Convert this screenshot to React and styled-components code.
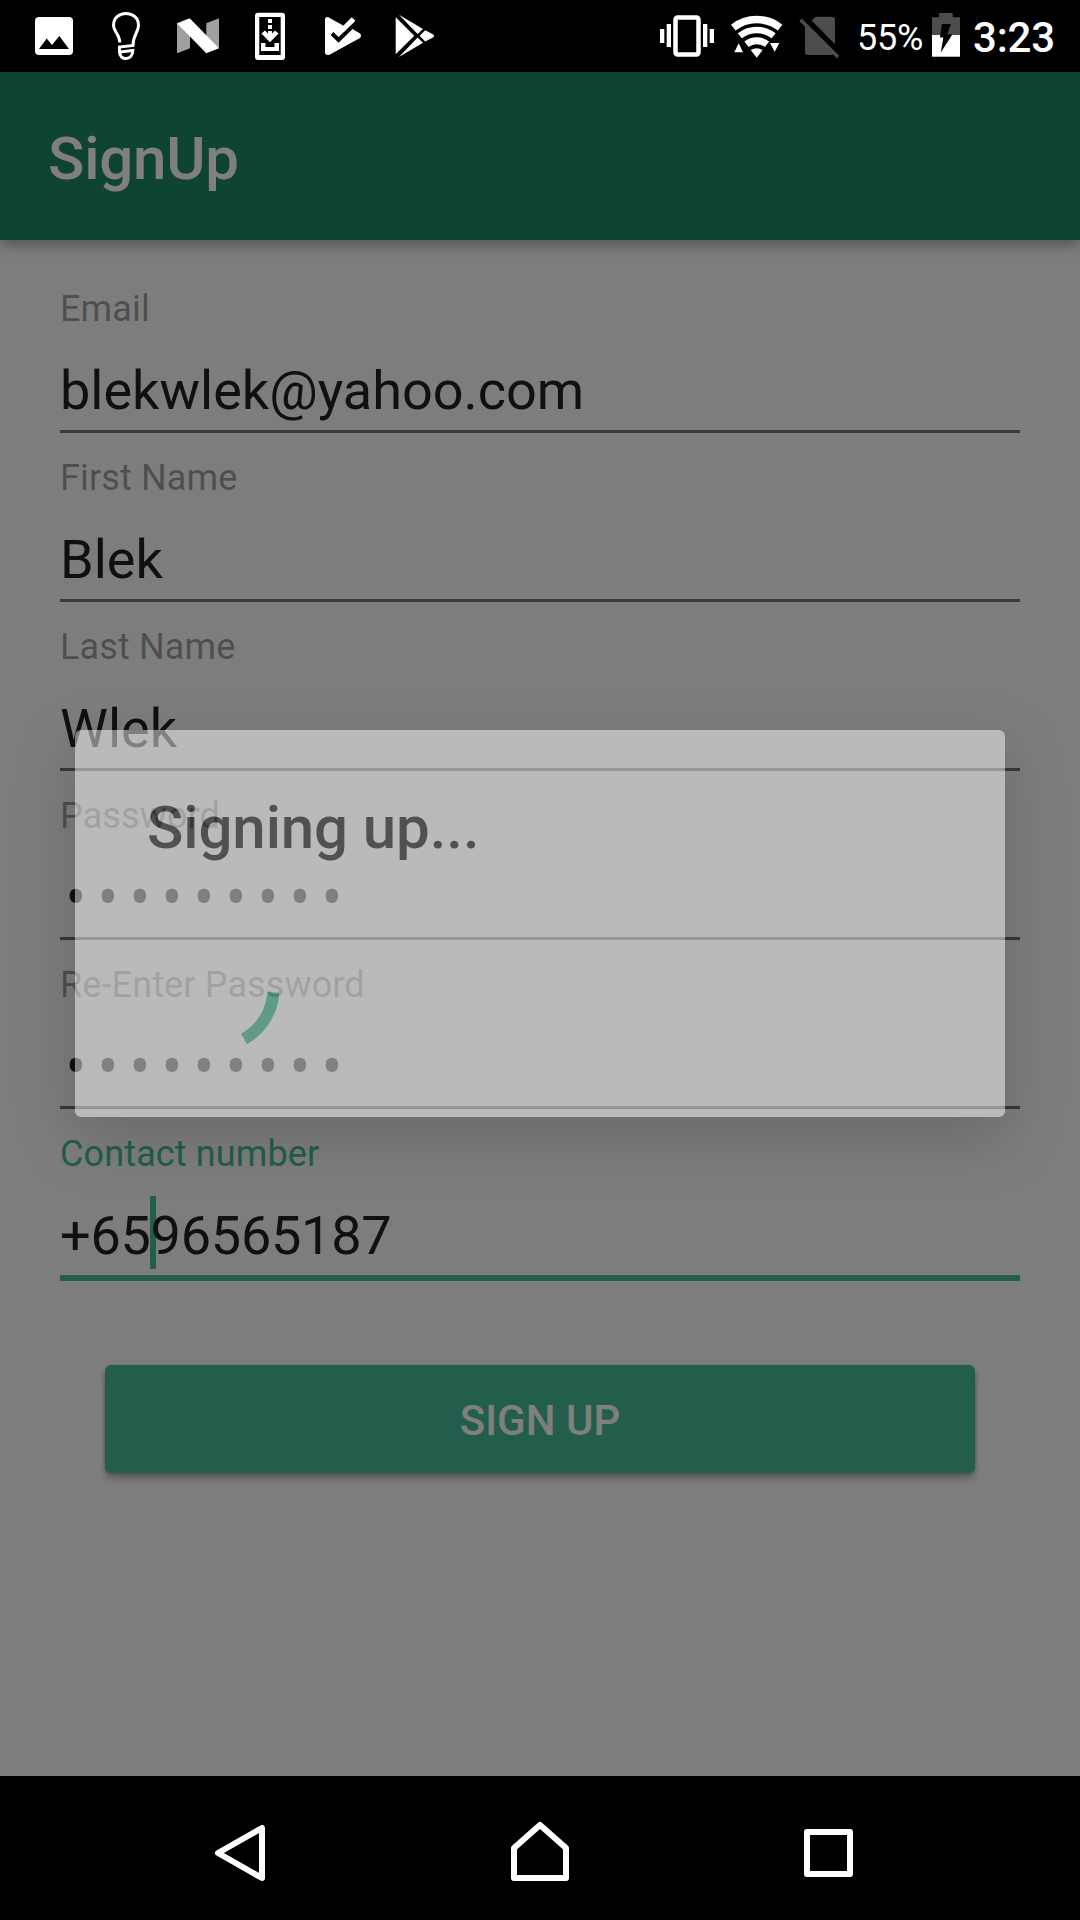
import React from "react";
import styled, { createGlobalStyle } from "styled-components";

const GlobalStyle = createGlobalStyle`
  * { box-sizing: border-box; }
  body { margin: 0; background: #000; font-family: Roboto, "Noto Sans", sans-serif; }
`;

const Screen = styled.div`
  width: 1080px;
  height: 1920px;
  display: flex;
  flex-direction: column;
  overflow: hidden;
`;

const StatusBar = styled.header`
  flex: none;
  height: 72px;
  display: flex;
  align-items: flex-start;
  justify-content: space-between;
  background: #000;
  color: #fff;
`;

const StatusGroup = styled.div`
  display: flex;
  height: 72px;
  padding: 0 ${(p) => p.$end || 0}px 0 ${(p) => p.$start || 0}px;
`;

const Glyph = styled.svg`
  flex: none;
  display: block;
`;

const Percent = styled.span`
  width: 68px;
  margin-left: -2px;
  font-size: 36px;
  line-height: 77px;
  letter-spacing: -0.2px;
  white-space: nowrap;
`;

const Clock = styled.span`
  width: 83px;
  padding-left: 1px;
  font-size: 42px;
  font-weight: 500;
  line-height: 75px;
  letter-spacing: -0.2px;
  white-space: nowrap;
`;

const Activity = styled.main`
  position: relative;
  flex: 1;
  display: flex;
  flex-direction: column;
  background: #fafafa;
`;

const AppBar = styled.div`
  flex: none;
  height: 168px;
  padding-left: 48px;
  display: flex;
  align-items: center;
  background: #1e8666;
  box-shadow: 0 4px 14px rgba(0, 0, 0, 0.36);
`;

const AppTitle = styled.h1`
  margin: 0;
  color: #fff;
  font-size: 60px;
  font-weight: 500;
  line-height: 72px;
  letter-spacing: -0.2px;
  padding-top: 6px;
`;

const Form = styled.form`
  display: flex;
  flex-direction: column;
  padding: 48px 60px 0;
`;

const Field = styled.div`
  display: flex;
  flex-direction: column;
  height: 169px;
`;

const Label = styled.label`
  font-size: 36px;
  line-height: 42px;
  letter-spacing: 0.13px;
  color: ${(p) => (p.$focused ? "#44bc96" : "rgba(0, 0, 0, 0.38)")};
`;

const Value = styled.div`
  position: relative;
  z-index: 0;
  margin-top: 29px;
  height: 64px;
  font-size: 54px;
  line-height: 64px;
  letter-spacing: ${(p) => (p.$numeric ? "-0.25px" : "0")};
  color: #212121;
  white-space: nowrap;
`;

const Masked = styled.span`
  display: flex;
  font-size: 62px;
`;

const Bullet = styled.span`
  width: 32px;
  text-align: center;
  transform: scaleY(1.08);
`;

const Caret = styled.i`
  position: relative;
  display: inline-block;
  width: 0;

  &::before {
    content: "";
    position: absolute;
    z-index: -1;
    left: -1px;
    bottom: -15px;
    width: 6px;
    height: 73px;
    background: #44bc96;
  }
`;

const Underline = styled.div`
  margin-top: 7px;
  height: ${(p) => (p.$focused ? 6 : 3)}px;
  flex: none;
  background: ${(p) => (p.$focused ? "#44bc96" : "rgba(0, 0, 0, 0.54)")};
`;

const SubmitButton = styled.button`
  margin: 63px 45px 0;
  height: 108px;
  border: 0;
  padding: 3px 0 0;
  border-radius: 6px;
  background: #44bc96;
  color: #fff;
  font: 500 42px/50px Roboto, sans-serif;
  box-shadow: 0 6px 6px rgba(0, 0, 0, 0.22), 0 1px 4px rgba(0, 0, 0, 0.2);
`;

const Scrim = styled.div`
  position: absolute;
  inset: 0;
  display: flex;
  align-items: center;
  justify-content: center;
  background: rgba(0, 0, 0, 0.5);
`;

const Dialog = styled.section`
  width: 930px;
  height: 387px;
  margin-bottom: 1px;
  padding: 62px 72px 0;
  border-radius: 6px;
  background: #fff;
  opacity: 0.472;
  box-shadow: 0 20px 58px 0 rgba(0, 0, 0, 0.32);
`;

const DialogTitle = styled.h2`
  margin: 0;
  font-size: 60px;
  font-weight: 500;
  line-height: 72px;
  letter-spacing: -0.1px;
  color: rgba(0, 0, 0, 0.87);
`;

const Spinner = styled.svg`
  display: block;
  margin-top: 53px;
`;

const NavBar = styled.nav`
  flex: none;
  height: 144px;
  display: flex;
  justify-content: center;
  background: #000;
`;

const NavButton = styled.span`
  width: 288px;
  height: 144px;
`;

/* Every status glyph is drawn in screen pixels; x is its left edge on the bar. */
function StatusGlyph({ x, width, children }) {
  return (
    <Glyph width={width} height="72" viewBox={`${x} 0 ${width} 72`} fill="#fff">
      {children}
    </Glyph>
  );
}

function StatusIcons() {
  return (
    <StatusGroup>
      <StatusGlyph x={0} width={90}>
        <rect x="35" y="17" width="38" height="38" rx="4" />
        <path d="M39 49 46.7 38.5 52 45 59.3 36 69 49Z" fill="#000" />
      </StatusGlyph>
      <StatusGlyph x={90} width={72}>
        <g fill="none" stroke="#fff" strokeWidth="3">
          <path d="M119.8 42.5C119.8 34 113.5 32 113.5 25.5C113.5 18 119 13.5 126 13.5C133 13.5 138.5 18 138.5 25.5C138.5 32 133 35 133 45.5L119.5 47V52C119.5 61 132.8 61 132.8 50.5L120.5 52" />
        </g>
      </StatusGlyph>
      <StatusGlyph x={162} width={72}>
        <path d="M177 23 190 30V48.3L177 53.3ZM206.3 23.3 219 18.3V48.3L206.3 40Z" fill="#a0a0a0" />
        <path d="M177 23.2 189.7 18.3 219 48.3 206.3 53.3Z" />
      </StatusGlyph>
      <StatusGlyph x={234} width={72}>
        <path
          fillRule="evenodd"
          d="M258 12.7H282Q285 12.7 285 15.7V57Q285 60 282 60H258Q255 60 255 57V15.7Q255 12.7 258 12.7ZM259.3 17V55H280.7V17Z"
        />
        <path d="M268 19h4v4h-4ZM268 25h4v4h-4ZM268 31h4v2.6l3-3 3.6 3-8.6 8.6-8.6-8.6 3.6-3 3 3ZM261 43h4.5v4h9v-4h4.5v8h-18Z" />
      </StatusGlyph>
      <StatusGlyph x={306} width={72}>
        <path d="M325 19Q325.500 16.500 328 17L343.500 25.800 351.500 17.600 355.200 21 351.500 27.500 353 29.300 360 33.500Q362 35.700 360 38L329 55Q325.500 55.500 325 53Z" />
        <path d="M332 33.500 338.600 40 356 22.900" fill="none" stroke="#000" strokeWidth="4" />
        <path d="M343 26.300 351.800 17.400 355.200 20.600 343.800 32 338.600 31Z" />
      </StatusGlyph>
      <StatusGlyph x={378} width={72}>
        <path d="M395.700 17.200 414.300 35.800 395.700 54.300ZM399 14.800 423 29 417.600 34ZM399 57 423 42.800 417.600 37.600ZM425.200 30.300 433 34.200Q435 35.800 433 37.500L425.200 41.500 419.600 35.800Z" />
      </StatusGlyph>
    </StatusGroup>
  );
}

function SystemIcons() {
  return (
    <StatusGroup $end={25}>
      <StatusGlyph x={656} width={70}>
        <rect x="675.500" y="17.500" width="23" height="37" rx="2" fill="none" stroke="#fff" strokeWidth="4.500" />
        <path d="M666.700 24h4.300v23h-4.300ZM660 29h4.300v14H660ZM703 24h4.300v23H703ZM709.700 29h4.300v14h-4.300Z" />
      </StatusGlyph>
      <StatusGlyph x={726} width={68}>
        <g fill="none" stroke="#fff">
          <path d="M733.300 27.600A38 38 0 0 1 780.100 27.600" strokeWidth="7.500" />
          <path d="M739.800 35.800A27.500 27.500 0 0 1 773.600 35.800" strokeWidth="6.500" />
          <path d="M746.400 44.300A16.800 16.800 0 0 1 767 44.300" strokeWidth="7" />
        </g>
        <path d="M750.700 50Q756.700 46.500 762.700 50L756.700 57.800ZM734.300 52.300H743L738.700 43.300ZM770 43H779.300L774.700 51.800Z" />
      </StatusGlyph>
      <StatusGlyph x={794} width={65}>
        <path
          d="M815.500 16.700H832Q835 16.700 835 19.700V52Q835 55 832 55H808Q805 55 805 52V26.500Z"
          fill="#4d4d4d"
        />
        <path d="M805 18 840 53.500" stroke="#000" strokeWidth="6" />
        <path d="M800.500 19.800 838 57" stroke="#4d4d4d" strokeWidth="3.400" />
      </StatusGlyph>
      <Percent>55%</Percent>
      <StatusGlyph x={925} width={47}>
        <path d="M932 17.300H939V13H952.700V17.300H960V35H932Z" fill="#4d4d4d" />
        <path d="M932 35H960V56.700H932Z" />
        <path d="M941.800 24H951L947.300 34.300H952.500L940.800 52.500 943.300 37.500H940Z" fill="#000" />
      </StatusGlyph>
      <Clock>3:23</Clock>
    </StatusGroup>
  );
}

function TextField({ label, focused, numeric, children }) {
  return (
    <Field>
      <Label $focused={focused}>{label}</Label>
      <Value $numeric={numeric}>{children}</Value>
      <Underline $focused={focused} />
    </Field>
  );
}

function Password({ length }) {
  return (
    <Masked>
      {Array.from({ length }, (_, i) => (
        <Bullet key={i}>•</Bullet>
      ))}
    </Masked>
  );
}

function NavigationBar() {
  const stroke = { fill: "none", stroke: "#fff", strokeWidth: 6, strokeLinejoin: "round" };
  return (
    <NavBar>
      <NavButton>
        <Glyph width="288" height="144" viewBox="108 1776 288 144">
          <path d="M218 1853 262 1828V1878Z" {...stroke} />
        </Glyph>
      </NavButton>
      <NavButton>
        <Glyph width="288" height="144" viewBox="396 1776 288 144">
          <path d="M514 1848 540 1825 566 1848V1878H514Z" {...stroke} />
        </Glyph>
      </NavButton>
      <NavButton>
        <Glyph width="288" height="144" viewBox="684 1776 288 144">
          <path d="M807 1832H850V1874H807Z" {...stroke} />
        </Glyph>
      </NavButton>
    </NavBar>
  );
}

export default function App() {
  return (
    <Screen>
      <GlobalStyle />
      <StatusBar>
        <StatusIcons />
        <SystemIcons />
      </StatusBar>
      <Activity>
        <AppBar>
          <AppTitle>SignUp</AppTitle>
        </AppBar>
        <Form>
          <TextField label="Email">blekwlek@yahoo.com</TextField>
          <TextField label="First Name">Blek</TextField>
          <TextField label="Last Name">Wlek</TextField>
          <TextField label="Password">
            <Password length={9} />
          </TextField>
          <TextField label="Re-Enter Password">
            <Password length={9} />
          </TextField>
          <TextField label="Contact number" focused numeric>
            +65
            <Caret />
            96565187
          </TextField>
          <SubmitButton type="button">SIGN UP</SubmitButton>
        </Form>
        <Scrim>
          <Dialog>
            <DialogTitle>Signing up...</DialogTitle>
            <Spinner width="144" height="144" viewBox="147 917 144 144" fill="none">
              <path d="M273.300 992.300A57 57 0 0 1 244 1038.900" stroke="#44bc96" strokeWidth="12" />
            </Spinner>
          </Dialog>
        </Scrim>
      </Activity>
      <NavigationBar />
    </Screen>
  );
}
